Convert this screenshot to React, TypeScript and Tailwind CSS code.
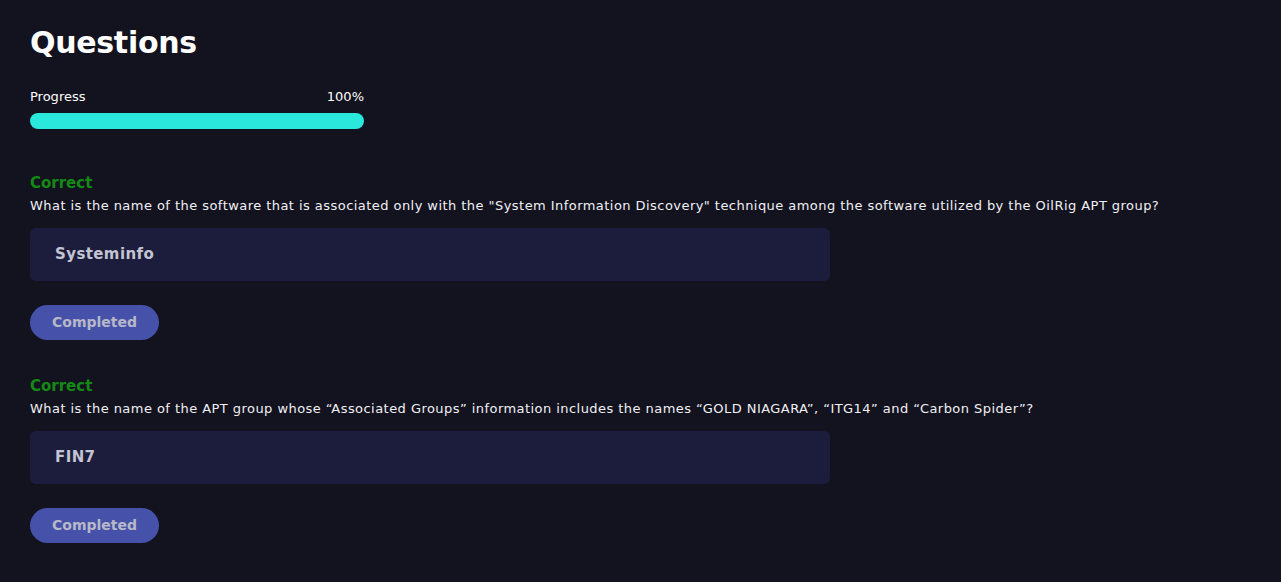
const QUESTIONS = [
  {
    q: 'What is the name of the software that is associated only with the "System Information Discovery" technique among the software utilized by the OilRig APT group?',
    a: "Systeminfo",
  },
  {
    q: "What is the name of the APT group whose \u201CAssociated Groups\u201D information includes the names \u201CGOLD NIAGARA\u201D, \u201CITG14\u201D and \u201CCarbon Spider\u201D?",
    a: "FIN7",
  },
];

export default function App() {
  return (
    <div className="min-h-[582px] bg-[#13121f] px-[30px] pt-[24px] font-['DejaVu_Sans',sans-serif] text-white">
      <h1 className="text-[30px] font-bold leading-[38px] tracking-[-0.3px]">Questions</h1>

      <div className="mt-[27px] w-[334px]">
        <div className="flex items-center justify-between text-[13px] leading-[16px]">
          <span>Progress</span>
          <span>100%</span>
        </div>
        <div className="mt-[8px] h-[16px] w-full rounded-full bg-[#2ae8dc]" />
      </div>

      <div className="mt-[44px] flex flex-col gap-[36px]">
        {QUESTIONS.map((item) => (
          <div key={item.a}>
            <div className="text-[15px] font-bold leading-[20px] text-[#148a14]">Correct</div>
            <p className="mt-[3px] text-[13px] leading-[20px] tracking-[0.45px] text-[#f0f0f4]">{item.q}</p>
            <div className="mt-[12px] flex h-[53px] w-[800px] items-center rounded-[6px] bg-[#1c1d3c] px-[25px] text-[15px] font-semibold tracking-[0.4px] text-[#c4c4d2]">
              {item.a}
            </div>
            <button className="mt-[24px] h-[35px] w-[129px] rounded-full bg-[#4652aa] text-[14px] font-bold text-[#b8b8c8]">
              Completed
            </button>
          </div>
        ))}
      </div>
    </div>
  );
}
